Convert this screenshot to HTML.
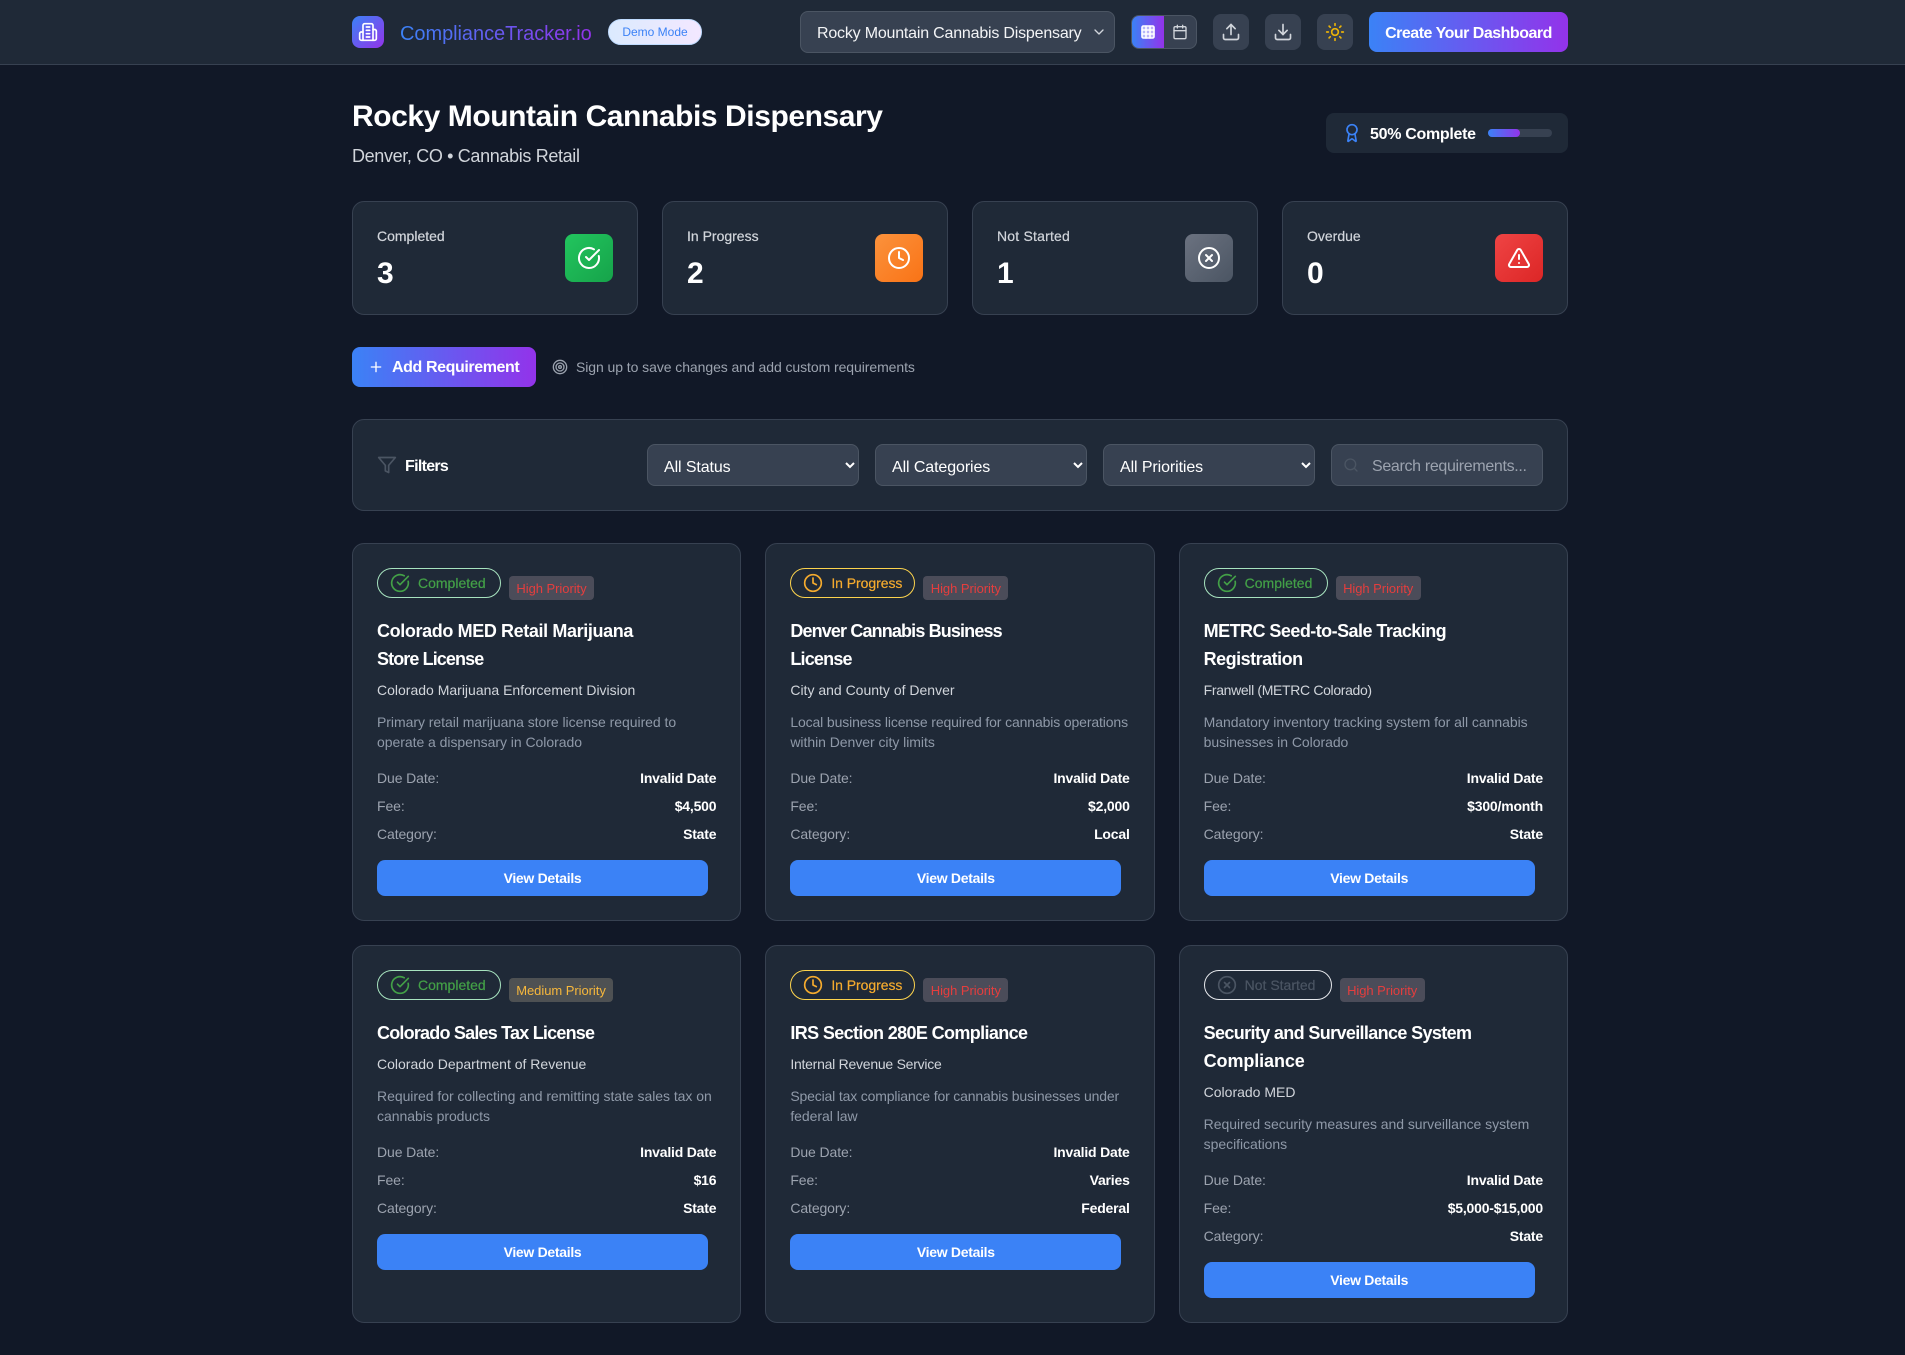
<!DOCTYPE html>
<html lang="en"><head><meta charset="utf-8"><title>ComplianceTracker.io</title>
<style>
*{box-sizing:border-box;margin:0;padding:0}
html,body{width:1905px;height:1355px;overflow:hidden;background:#111827}
body{position:relative;font-family:"Liberation Sans",sans-serif;color:#fff}
.a{position:absolute;white-space:nowrap}
svg{display:block;fill:none;stroke:currentColor;stroke-width:2;stroke-linecap:round;stroke-linejoin:round}
.grad{background:linear-gradient(90deg,#3b82f6,#9333ea)}
.hdr{left:0;top:0;width:1905px;height:65px;background:#1f2937;border-bottom:1px solid #374151}
.ib{width:36px;height:36px;top:14px;background:#374151;border-radius:8px;color:#d1d5db;display:flex;align-items:center;justify-content:center}
.stat{top:201px;width:286px;height:114px;background:#1f2937;border:1px solid #374151;border-radius:12px}
.stat .l{position:absolute;left:24px;top:24px;font-size:14px;line-height:20px;color:#d1d5db;white-space:nowrap;-webkit-text-stroke:.2px #d1d5db}
.stat .n{position:absolute;left:24px;top:54px;font-size:30px;line-height:36px;font-weight:700}
.stat .i{position:absolute;left:212px;top:32px;width:48px;height:48px;border-radius:8px;display:flex;align-items:center;justify-content:center}
.sel{top:444px;width:212px;height:42px;background:#374151;border:1px solid #4b5563;border-radius:8px;color:#fff;font:16px "Liberation Sans",sans-serif;padding:10px 12px 6px;letter-spacing:-.1px}
.card{position:absolute;width:389.33px;height:378px;background:#1f2937;border:1px solid #374151;border-radius:12px;padding:24px}
.top{position:relative;height:49px}
.pill{position:absolute;left:0;top:0;height:30px;border-radius:15px;border:1px solid;display:flex;align-items:center;padding-left:12px;font-size:14px;white-space:nowrap;-webkit-text-stroke:.2px currentColor}
.pill svg{margin-right:8px;-webkit-text-stroke:0}
.done{width:124px;color:#43a047;border-color:#a7e3bf}
.prog{width:125px;color:#f5ab2e;border-color:#fcd34d;letter-spacing:-.05px}
.none{width:128px;color:#4b5563;border-color:#e5e7eb}
.pri{position:absolute;top:8px;width:85px;height:24px;border-radius:4px;background:#4b4c59;color:#e53e3e;font-size:13px;line-height:25px;text-align:center;white-space:nowrap;letter-spacing:-.05px}
.med{width:104px;background:#4e5153;color:#f6b73c}
h3{font-size:18px;line-height:28px;font-weight:700;white-space:nowrap;letter-spacing:-.65px}
h3 span{display:inline}
.ag{margin-top:7px;font-size:14px;line-height:20px;color:#d1d5db;white-space:nowrap}
.de{margin-top:12px;margin-bottom:16px;font-size:14px;line-height:20px;color:#8f99a8;white-space:nowrap;letter-spacing:-.04px}
.r{display:flex;justify-content:space-between;font-size:14px;line-height:20px;color:#9ca3af;margin-bottom:8px;letter-spacing:-.1px}
.r b{color:#fff;font-weight:700;letter-spacing:-.2px}
.btn{display:block;margin-top:16px;width:331px;height:36px;background:#3b82f6;border-radius:8px;color:#fff;font-size:14px;font-weight:700;line-height:36px;text-align:center;letter-spacing:-.3px}
</style></head><body>

<div class="a hdr"></div>
<div class="a" style="left:352px;top:16px;width:32px;height:32px;border-radius:8px;background:linear-gradient(135deg,#3b82f6,#9333ea);color:#fff;display:flex;align-items:center;justify-content:center"><svg width="20" height="20" viewBox="0 0 24 24"><path d="M6 22V4a2 2 0 0 1 2-2h8a2 2 0 0 1 2 2v18Z"/><path d="M6 12H4a2 2 0 0 0-2 2v6a2 2 0 0 0 2 2h2"/><path d="M18 9h2a2 2 0 0 1 2 2v9a2 2 0 0 1-2 2h-2"/><path d="M10 6h4"/><path d="M10 10h4"/><path d="M10 14h4"/><path d="M10 18h4"/></svg></div>
<div class="a" style="left:400px;top:20px;font-size:20px;line-height:28px;letter-spacing:-.05px;background:linear-gradient(90deg,#3b82f6,#9333ea);-webkit-background-clip:text;background-clip:text;color:transparent">ComplianceTracker.io</div>
<div class="a" style="left:608px;top:19px;width:94px;height:26px;border-radius:13px;background:linear-gradient(90deg,#dbeafe,#f3e8ff);border:1px solid #bfdbfe;color:#3b82f6;font-size:12px;line-height:24px;text-align:center">Demo Mode</div>

<div class="a" style="left:800px;top:11px;width:315px;height:42px;background:#374151;border:1px solid #4b5563;border-radius:8px;font-size:16px;line-height:43px;padding-left:16px;color:#f3f4f6;letter-spacing:-.2px">Rocky Mountain Cannabis Dispensary</div>
<svg class="a" style="left:1091px;top:24px;color:#d1d5db" width="16" height="16" viewBox="0 0 24 24"><path d="m6 9 6 6 6-6"/></svg>

<div class="a" style="left:1131px;top:15px;width:66px;height:34px;border-radius:8px;border:1px solid #4b5563;background:#374151;overflow:hidden"></div>
<div class="a grad" style="left:1132px;top:16px;width:32px;height:32px;border-radius:7px 0 0 7px;color:#fff;display:flex;align-items:center;justify-content:center"><svg width="16" height="16" viewBox="0 0 24 24" style="fill:rgba(255,255,255,.55);stroke-width:2.4"><rect x="3" y="3" width="18" height="18" rx="2"/><path d="M3 9h18"/><path d="M3 15h18"/><path d="M9 3v18"/><path d="M15 3v18"/></svg></div>
<div class="a" style="left:1164px;top:16px;width:32px;height:32px;color:#d1d5db;display:flex;align-items:center;justify-content:center"><svg width="16" height="16" viewBox="0 0 24 24"><path d="M8 2v4"/><path d="M16 2v4"/><rect x="3" y="4" width="18" height="18" rx="2"/><path d="M3 10h18"/></svg></div>

<div class="a ib" style="left:1213px"><svg width="20" height="20" viewBox="0 0 24 24"><path d="M21 15v4a2 2 0 0 1-2 2H5a2 2 0 0 1-2-2v-4"/><polyline points="17 8 12 3 7 8"/><line x1="12" y1="3" x2="12" y2="15"/></svg></div>
<div class="a ib" style="left:1265px"><svg width="20" height="20" viewBox="0 0 24 24"><path d="M21 15v4a2 2 0 0 1-2 2H5a2 2 0 0 1-2-2v-4"/><polyline points="7 10 12 15 17 10"/><line x1="12" y1="15" x2="12" y2="3"/></svg></div>
<div class="a ib" style="left:1317px;color:#eab308"><svg width="20" height="20" viewBox="0 0 24 24"><circle cx="12" cy="12" r="4"/><path d="M12 2v2"/><path d="M12 20v2"/><path d="m4.93 4.93 1.41 1.41"/><path d="m17.66 17.66 1.41 1.41"/><path d="M2 12h2"/><path d="M20 12h2"/><path d="m6.34 17.66-1.41 1.41"/><path d="m19.07 4.93-1.41 1.41"/></svg></div>
<div class="a grad" style="left:1369px;top:12px;width:199px;height:40px;border-radius:8px;font-size:16px;font-weight:700;line-height:43px;text-align:center;letter-spacing:-.5px">Create Your Dashboard</div>

<div class="a" style="left:352px;top:97px;font-size:30px;line-height:40px;font-weight:700;letter-spacing:-.43px">Rocky Mountain Cannabis Dispensary</div>
<div class="a" style="left:352px;top:142px;font-size:18px;line-height:28px;color:#d1d5db;letter-spacing:-.35px">Denver, CO • Cannabis Retail</div>

<div class="a" style="left:1326px;top:113px;width:242px;height:40px;background:#1f2937;border-radius:8px"></div>
<svg class="a" style="left:1342px;top:123px;color:#3b82f6" width="20" height="20" viewBox="0 0 24 24"><path d="m15.477 12.89 1.515 8.526a.5.5 0 0 1-.81.47l-3.58-2.687a1 1 0 0 0-1.197 0l-3.586 2.686a.5.5 0 0 1-.81-.469l1.514-8.526"/><circle cx="12" cy="8" r="6"/></svg>
<div class="a" style="left:1370px;top:123px;font-size:16px;line-height:24px;font-weight:700;letter-spacing:-.3px">50% Complete</div>
<div class="a" style="left:1488px;top:129px;width:64px;height:8px;border-radius:4px;background:#374151"></div>
<div class="a grad" style="left:1488px;top:129px;width:32px;height:8px;border-radius:4px"></div>

<div class="a stat" style="left:352px"><div class="l">Completed</div><div class="n">3</div><div class="i" style="background:linear-gradient(135deg,#22c55e,#16a34a)"><svg width="24" height="24" viewBox="0 0 24 24" style="color:#fff"><path d="M21.801 10A10 10 0 1 1 17 3.335"/><path d="m9 11 3 3L22 4"/></svg></div></div>
<div class="a stat" style="left:662px"><div class="l">In Progress</div><div class="n">2</div><div class="i" style="background:linear-gradient(135deg,#fb923c,#f97316)"><svg width="24" height="24" viewBox="0 0 24 24" style="color:#fff"><circle cx="12" cy="12" r="10"/><polyline points="12 6 12 12 16 14"/></svg></div></div>
<div class="a stat" style="left:972px"><div class="l" style="letter-spacing:.2px">Not Started</div><div class="n">1</div><div class="i" style="background:linear-gradient(135deg,#6b7280,#4b5563)"><svg width="24" height="24" viewBox="0 0 24 24" style="color:#fff"><circle cx="12" cy="12" r="10"/><path d="m15 9-6 6"/><path d="m9 9 6 6"/></svg></div></div>
<div class="a stat" style="left:1282px"><div class="l">Overdue</div><div class="n">0</div><div class="i" style="background:linear-gradient(135deg,#ef4444,#dc2626)"><svg width="24" height="24" viewBox="0 0 24 24" style="color:#fff"><path d="m21.73 18-8-14a2 2 0 0 0-3.48 0l-8 14A2 2 0 0 0 4 21h16a2 2 0 0 0 1.73-3"/><path d="M12 9v4"/><path d="M12 17h.01"/></svg></div></div>

<div class="a grad" style="left:352px;top:347px;width:184px;height:40px;border-radius:8px"></div>
<svg class="a" style="left:368px;top:359px;color:#fff" width="16" height="16" viewBox="0 0 24 24"><path d="M5 12h14"/><path d="M12 5v14"/></svg>
<div class="a" style="left:392px;top:356px;font-size:16px;line-height:24px;font-weight:700;letter-spacing:-.4px">Add Requirement</div>
<svg class="a" style="left:552px;top:359px;color:#9ca3af" width="16" height="16" viewBox="0 0 24 24"><circle cx="12" cy="12" r="10"/><circle cx="12" cy="12" r="6"/><circle cx="12" cy="12" r="2"/></svg>
<div class="a" style="left:576px;top:357px;font-size:14px;line-height:20px;color:#9ca3af;letter-spacing:-.07px">Sign up to save changes and add custom requirements</div>

<div class="a" style="left:352px;top:419px;width:1216px;height:92px;background:#1f2937;border:1px solid #374151;border-radius:12px"></div>
<svg class="a" style="left:377px;top:455px;color:#4b5563" width="20" height="20" viewBox="0 0 24 24"><polygon points="22 3 2 3 10 12.46 10 19 14 21 14 12.46 22 3"/></svg>
<div class="a" style="left:405px;top:455px;font-size:16px;line-height:24px;font-weight:700;letter-spacing:-.7px">Filters</div>
<select class="a sel" style="left:647px"><option>All Status</option></select>
<select class="a sel" style="left:875px"><option>All Categories</option></select>
<select class="a sel" style="left:1103px"><option>All Priorities</option></select>
<div class="a" style="left:1331px;top:444px;width:212px;height:42px;background:#374151;border:1px solid #4b5563;border-radius:8px;font-size:16px;line-height:43px;padding-left:40px;color:#9ca3af;letter-spacing:-.33px">Search requirements...</div>
<svg class="a" style="left:1343px;top:457px;color:#4b5563" width="16" height="16" viewBox="0 0 24 24"><circle cx="11" cy="11" r="8"/><path d="m21 21-4.3-4.3"/></svg>

<!-- Cards -->
<div class="card" style="left:352px;top:543px">
<div class="top"><div class="pill done"><svg width="20" height="20" viewBox="0 0 24 24"><path d="M21.801 10A10 10 0 1 1 17 3.335"/><path d="m9 11 3 3L22 4"/></svg>Completed</div><div class="pri" style="left:132px">High Priority</div></div>
<h3><span style="letter-spacing:-.38px">Colorado MED Retail Marijuana</span><br><span style="letter-spacing:-.9px">Store License</span></h3>
<div class="ag">Colorado Marijuana Enforcement Division</div>
<div class="de">Primary retail marijuana store license required to<br>operate a dispensary in Colorado</div>
<div class="r"><span>Due Date:</span><b>Invalid Date</b></div><div class="r"><span>Fee:</span><b>$4,500</b></div><div class="r"><span>Category:</span><b>State</b></div>
<div class="btn">View Details</div>
</div>

<div class="card" style="left:765.33px;top:543px">
<div class="top"><div class="pill prog"><svg width="20" height="20" viewBox="0 0 24 24"><circle cx="12" cy="12" r="10"/><polyline points="12 6 12 12 16 14"/></svg>In Progress</div><div class="pri" style="left:133px">High Priority</div></div>
<h3><span style="letter-spacing:-.86px">Denver Cannabis Business</span><br><span style="letter-spacing:-.8px">License</span></h3>
<div class="ag">City and County of Denver</div>
<div class="de"><span style="letter-spacing:-.13px">Local business license required for cannabis operations</span><br>within Denver city limits</div>
<div class="r"><span>Due Date:</span><b>Invalid Date</b></div><div class="r"><span>Fee:</span><b>$2,000</b></div><div class="r"><span>Category:</span><b>Local</b></div>
<div class="btn">View Details</div>
</div>

<div class="card" style="left:1178.67px;top:543px">
<div class="top"><div class="pill done"><svg width="20" height="20" viewBox="0 0 24 24"><path d="M21.801 10A10 10 0 1 1 17 3.335"/><path d="m9 11 3 3L22 4"/></svg>Completed</div><div class="pri" style="left:132px">High Priority</div></div>
<h3><span style="letter-spacing:-.54px">METRC Seed-to-Sale Tracking</span><br><span style="letter-spacing:-.5px">Registration</span></h3>
<div class="ag" style="letter-spacing:-.34px">Franwell (METRC Colorado)</div>
<div class="de">Mandatory inventory tracking system for all cannabis<br>businesses in Colorado</div>
<div class="r"><span>Due Date:</span><b>Invalid Date</b></div><div class="r"><span>Fee:</span><b>$300/month</b></div><div class="r"><span>Category:</span><b>State</b></div>
<div class="btn">View Details</div>
</div>

<div class="card" style="left:352px;top:945px">
<div class="top"><div class="pill done"><svg width="20" height="20" viewBox="0 0 24 24"><path d="M21.801 10A10 10 0 1 1 17 3.335"/><path d="m9 11 3 3L22 4"/></svg>Completed</div><div class="pri med" style="left:132px">Medium Priority</div></div>
<h3><span style="letter-spacing:-.79px">Colorado Sales Tax License</span></h3>
<div class="ag">Colorado Department of Revenue</div>
<div class="de">Required for collecting and remitting state sales tax on<br>cannabis products</div>
<div class="r"><span>Due Date:</span><b>Invalid Date</b></div><div class="r"><span>Fee:</span><b>$16</b></div><div class="r"><span>Category:</span><b>State</b></div>
<div class="btn">View Details</div>
</div>

<div class="card" style="left:765.33px;top:945px">
<div class="top"><div class="pill prog"><svg width="20" height="20" viewBox="0 0 24 24"><circle cx="12" cy="12" r="10"/><polyline points="12 6 12 12 16 14"/></svg>In Progress</div><div class="pri" style="left:133px">High Priority</div></div>
<h3><span style="letter-spacing:-.63px">IRS Section 280E Compliance</span></h3>
<div class="ag" style="letter-spacing:-.25px">Internal Revenue Service</div>
<div class="de"><span style="letter-spacing:-.16px">Special tax compliance for cannabis businesses under</span><br>federal law</div>
<div class="r"><span>Due Date:</span><b>Invalid Date</b></div><div class="r"><span>Fee:</span><b>Varies</b></div><div class="r"><span>Category:</span><b>Federal</b></div>
<div class="btn">View Details</div>
</div>

<div class="card" style="left:1178.67px;top:945px">
<div class="top"><div class="pill none"><svg width="20" height="20" viewBox="0 0 24 24"><circle cx="12" cy="12" r="10"/><path d="m15 9-6 6"/><path d="m9 9 6 6"/></svg>Not Started</div><div class="pri" style="left:136px">High Priority</div></div>
<h3><span style="letter-spacing:-.64px">Security and Surveillance System</span><br><span style="letter-spacing:-.1px">Compliance</span></h3>
<div class="ag">Colorado MED</div>
<div class="de">Required security measures and surveillance system<br>specifications</div>
<div class="r"><span>Due Date:</span><b>Invalid Date</b></div><div class="r"><span>Fee:</span><b>$5,000-$15,000</b></div><div class="r"><span>Category:</span><b>State</b></div>
<div class="btn">View Details</div>
</div>

</body></html>
